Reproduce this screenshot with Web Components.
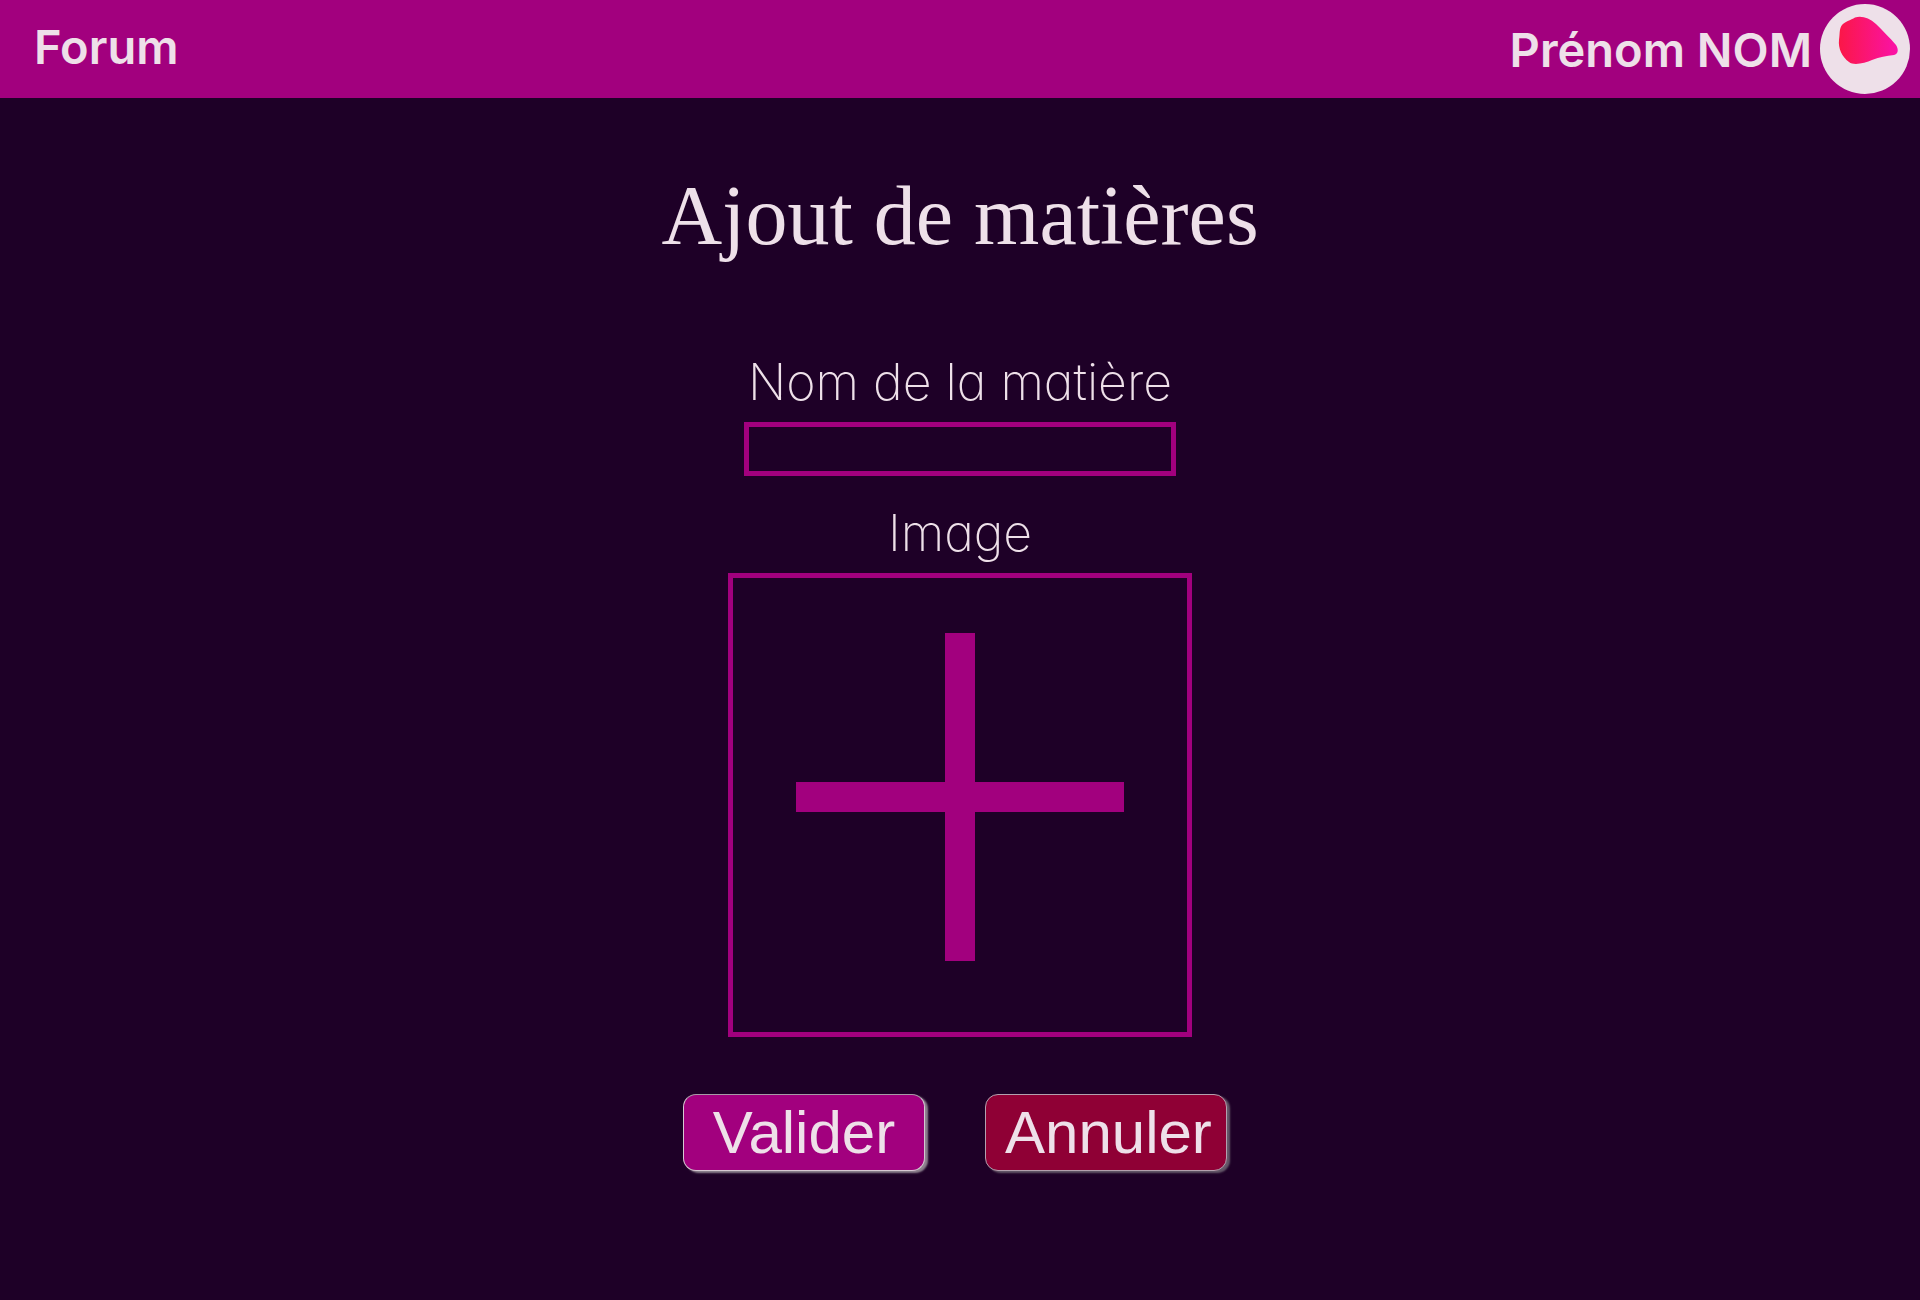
<!DOCTYPE html>
<html lang="fr">
<head>
<meta charset="utf-8">
<meta name="viewport" content="width=device-width, initial-scale=1">
<title>Ajout de matières</title>
<style>
:root{--bg:#1e0027;--main:#a2007e;--danger:#8f0035;--text:#eee0e9}
body{margin:0;min-height:100vh;background:var(--bg);color:var(--text);font-family:Inter,"Open Sans",sans-serif;font-feature-settings:"cv11"}
</style>
</head>
<body>
<forum-header>
  <a slot="home" href="#">Forum</a>
  <user-badge slot="user">Prénom NOM</user-badge>
</forum-header>
<subject-page>
  <span slot="title">Ajout de matières</span>
  <text-field>Nom de la matière</text-field>
  <image-field>Image</image-field>
  <form-button slot="actions">Valider</form-button>
  <form-button slot="actions" class="danger">Annuler</form-button>
</subject-page>
<script>
const define = (name, html) => {
  const template = document.createElement('template');
  template.innerHTML = html;
  customElements.define(name, class extends HTMLElement {
    constructor() {
      super();
      this.attachShadow({ mode: 'open' }).append(template.content.cloneNode(true));
    }
  });
};

define('forum-header', `
<style>
:host{display:block;background:var(--main)}
header{display:flex;justify-content:space-between;align-items:center;min-height:98px;box-sizing:border-box;padding:0 10px 0 34px}
::slotted(a){color:inherit;text-decoration:none;font-size:47px;line-height:56px;font-weight:600;padding-bottom:4px}
</style>
<header><slot name="home"></slot><slot name="user"></slot></header>`);

define('user-badge', `
<style>
:host{display:block}
a{display:flex;align-items:center;gap:8px;color:inherit;text-decoration:none;font-size:47px;line-height:56px;font-weight:600}
span{padding-top:2px}
svg{display:block;width:90px;height:90px}
</style>
<a href="#"><span><slot></slot></span>
<svg viewBox="0 0 90 90" aria-hidden="true">
<defs><linearGradient id="g" x1="0" x2="1" y1="0" y2="0"><stop offset="0" stop-color="#fb1747"/><stop offset="1" stop-color="#fa12a8"/></linearGradient></defs>
<circle cx="45" cy="45" r="45" fill="#eee0e9"/>
<path fill="url(#g)" d="M22 21C24 18 31 16 35 13.500C42 11.500 49 14 56 20C62 26 70 34 76 41C79 46 78 50 74 51C66 52 60 53 52 56C45 59 34 62 29 58C22 53 18 44 19 36C20 30 19 25 22 21Z"/>
</svg></a>`);

define('subject-page', `
<style>
:host{display:block}
main,form{display:flex;flex-direction:column;align-items:center}
main{padding:68px 24px}
h1{margin:0 0 84px;font:400 84px/100px "Liberation Serif",serif;text-align:center}
form{gap:25px}
.actions{display:flex;flex-wrap:wrap;justify-content:center;gap:60px;padding:32px 10px 0 0}
</style>
<main><h1><slot name="title"></slot></h1>
<form><slot></slot><div class="actions"><slot name="actions"></slot></div></form></main>`);

define('text-field', `
<style>
:host{display:flex;flex-direction:column}
label{font-size:50px;line-height:64px;font-weight:200;margin-bottom:8px;padding:0 4px;text-align:center}
input{box-sizing:border-box;width:100%;min-width:0;height:54px;border:5px solid var(--main);border-radius:0;background:transparent;color:inherit;font:300 32px Inter,sans-serif;padding:0 8px;outline:0}
</style>
<label for="name"><slot></slot></label><input id="name" type="text" size="1">`);

define('image-field', `
<style>
:host{display:flex;flex-direction:column;align-items:center}
.name{font-size:50px;line-height:64px;font-weight:200;margin-bottom:8px}
.drop{position:relative;display:block;border:5px solid var(--main);padding:55px 63px 71px;cursor:pointer}
svg{display:block;width:328px;height:328px;fill:var(--main)}
input{position:absolute;inset:0;width:100%;height:100%;opacity:0;cursor:pointer}
</style>
<label class="name" for="file"><slot></slot></label>
<div class="drop">
<svg viewBox="0 0 328 328" aria-hidden="true"><path d="M149 0h30v149h149v30H179v149h-30V179H0v-30h149z"/></svg>
<input id="file" type="file" accept="image/*">
</div>`);

define('form-button', `
<style>
:host{display:block}
button{box-sizing:border-box;width:242px;height:77px;padding:0 19px;border:1px solid #d6c8d2;border-top-color:#a79aa6;border-radius:13px;background:var(--main);color:var(--text);font:400 60px/70px "Liberation Sans",sans-serif;white-space:nowrap;box-shadow:3px 2px 2px #8f8390;cursor:pointer}
:host(.danger) button{background:var(--danger);border-color:#b3a0ae;box-shadow:3px 2px 2px #655869}
</style>
<button type="button"><slot></slot></button>`);
</script>
</body>
</html>
